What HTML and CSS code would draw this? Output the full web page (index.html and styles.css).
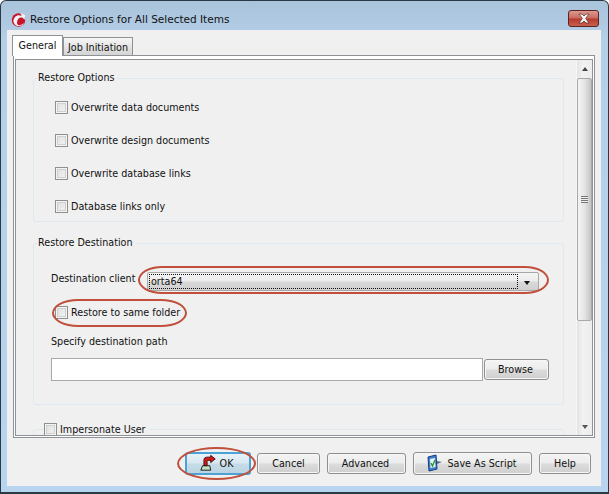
FILE: index.html
```html
<!DOCTYPE html>
<html lang="en">
<head>
<meta charset="utf-8">
<title>Restore Options</title>
<link rel="stylesheet" href="styles.css">
</head>
<body>
<div class="window">
  <header class="titlebar">
    <svg class="app-icon" width="15" height="15" viewBox="0 0 16 16"><circle cx="8" cy="8.500" r="7.200" fill="#c8142a"/><path d="M2.500 10 C3 4 8 2 11.500 4.500 L10 1 L15 3.500 L14.500 8.500 L12.800 6.500 C9.500 4.800 6 7.500 6.500 12.500 C8 15 11.500 14.500 13.500 11.500 C13 16 4.500 17 2.500 10Z" fill="#f4f4f4"/></svg>
    <span class="title">Restore Options for All Selected Items</span>
    <button class="close" aria-label="Close"><svg width="16" height="11" viewBox="0 0 16 11"><path d="M3 1 L6 1 L8 3 L10 1 L13 1 L9.700 5.500 L13 10 L10 10 L8 8 L6 10 L3 10 L6.300 5.500Z" fill="#f2f2f2" stroke="#6a3a36" stroke-width=".8"/></svg></button>
  </header>
  <div class="client">
    <nav class="tabs">
      <div class="tab active">General</div>
      <div class="tab">Job Initiation</div>
    </nav>
    <div class="pane">
      <div class="pane-inner">
        <div class="scroll-content">
          <fieldset class="group options">
            <legend>Restore Options</legend>
            <div class="options-body">
              <label class="check"><span class="box"></span>Overwrite data documents</label>
              <label class="check"><span class="box"></span>Overwrite design documents</label>
              <label class="check"><span class="box"></span>Overwrite database links</label>
              <label class="check"><span class="box"></span>Database links only</label>
            </div>
          </fieldset>
          <fieldset class="group destination">
            <legend>Restore Destination</legend>
            <div class="destination-body">
              <div class="client-row">
                <span class="client-label">Destination client</span>
                <div class="combo">
                  <span class="combo-value">orta64</span>
                  <span class="combo-arrow"></span>
                </div>
              </div>
              <label class="check same"><span class="box"></span>Restore to same folder</label>
              <div class="path-label">Specify destination path</div>
              <div class="path-row">
                <div class="path-input"></div>
                <button class="btn browse">Browse</button>
              </div>
            </div>
          </fieldset>
          <fieldset class="group impersonate">
            <legend><label class="check inline"><span class="box"></span>Impersonate User</label></legend>
          </fieldset>
        </div>
        <div class="scrollbar">
          <span class="arrow up"></span>
          <div class="thumb"><span class="grip"></span></div>
          <span class="arrow down"></span>
        </div>
      </div>
    </div>
    <footer class="actions">
      <button class="btn ok"><svg width="18" height="18" viewBox="0 0 20 18"><path d="M2 17 L4 12 L12 12 L13 17Z" fill="#bfe0c4" stroke="#111" stroke-width="1"/><path d="M5.500 12 L5.500 6 C5.500 3 7 2.500 10 2.500 L13 2.500 L13 0.500 L18 4.500 L13 8.500 L13 6 L10 6 C9 6 9 7 9 8 L9 12Z" fill="#d81818" stroke="#3a0808" stroke-width="1"/></svg>OK</button>
      <button class="btn cancel">Cancel</button>
      <button class="btn advanced">Advanced</button>
      <button class="btn script"><svg width="18" height="18" viewBox="0 0 18 18"><path d="M2 3 L10 1 L11 15 L3 17Z" fill="#3f7fd0" stroke="#143a80" stroke-width="1"/><path d="M4 5 L9 4 L9.500 13 L4.500 14Z" fill="#e8f2fa"/><path d="M5 9 L6.500 12 L9 6" fill="none" stroke="#2a9a2a" stroke-width="1.400"/><path d="M11 7 L16 8 L11 10Z" fill="#5b6f8c"/></svg>Save As Script</button>
      <button class="btn help">Help</button>
    </footer>
  </div>
  <span class="ring ring-combo"></span>
  <span class="ring ring-same"></span>
  <span class="ring ring-ok"></span>
</div>
</body>
</html>
```
FILE: styles.css
```css
* { box-sizing: border-box; }
html, body { margin: 0; padding: 0; }
body {
  width: 609px;
  height: 494px;
  overflow: hidden;
  font-family: "DejaVu Sans", sans-serif;
  font-size: 9.600px;
  color: #111;
  background: #fff;
}
.window {
  position: relative;
  width: 609px;
  height: 494px;
  display: flex;
  flex-direction: column;
  padding: 0 7px 6px 6px;
  border: 1px solid #2a3a44;
  border-bottom-width: 2px;
  border-radius: 6px 6px 0 0;
  background: linear-gradient(180deg, #a9c3db 0, #b4cfe8 40px, #b9d4ee 100%);
}
.titlebar {
  height: 29px;
  flex: none;
  display: flex;
  align-items: flex-start;
  padding-top: 9px;
}
.app-icon { flex: none; margin: 2px 0 0 4px; }
.title {
  margin-left: 4px;
  line-height: 18px;
  font-size: 10.500px;
  color: #111;
  flex: 1;
}
.close {
  width: 31px;
  height: 17px;
  margin-right: 2px;
  padding: 0;
  display: flex;
  align-items: center;
  justify-content: center;
  border: 1px solid #5c2320;
  border-radius: 3px;
  background: linear-gradient(180deg, #dc9a90 0, #c96a5f 48%, #b53a2c 52%, #c9604f 100%);
}
.client {
  flex: 1;
  min-height: 0;
  display: flex;
  flex-direction: column;
  padding: 5px 0 0 6px;
  background: #f0f0f0;
}
.tabs {
  display: flex;
  align-items: flex-end;
  height: 20px;
  flex: none;
  margin-left: -1px;
  position: relative;
  z-index: 1;
}
.tab {
  width: 70px;
  height: 18px;
  padding-top: 4px;
  border: 1px solid #8e9296;
  border-bottom: 0;
  background: linear-gradient(180deg, #f6f6f6, #d4d4d4);
  white-space: nowrap;
  text-align: center;
}
.tab.active {
  width: 51px;
  height: 21px;
  margin-bottom: -1px;
  padding-top: 4px;
  background: #fff;
}
.pane {
  flex: none;
  width: 582px;
  height: 383px;
  padding: 3px 1px 1px 1px;
  border: 1px solid #8e9296;
  background: #fff;
}
.pane-inner {
  width: 100%;
  height: 100%;
  display: flex;
  overflow: hidden;
  border: 1px solid #8e9296;
  background: #f0f0f0;
}
.scroll-content {
  flex: 1;
  min-width: 0;
  height: 500px;
  padding: 12px 12px 0 17px;
}
.group {
  margin: 0;
  padding: 0;
  border: 1px solid #dfe8ef;
  border-radius: 3px;
  min-inline-size: 0;
}
.group legend {
  margin-left: 3px;
  padding: 0 3px 0 1px;
  line-height: 12px;
}
.options { height: 150px; }
.options-body { padding: 7px 0 0 21px; }
.check {
  display: flex;
  align-items: center;
  height: 33px;
  gap: 3px;
}
.box {
  width: 13px;
  height: 13px;
  flex: none;
  border: 1px solid #8e8f8f;
  background: linear-gradient(135deg, #dcdcdc, #f6f6f6);
  box-shadow: inset 0 0 0 1px #f4f4f4, inset 0 0 0 2px #cfcfcf;
}
.destination {
  margin-top: 15px;
  height: 168px;
}
.destination-body { padding: 23px 14px 0 17px; }
.client-row {
  display: flex;
  align-items: flex-start;
  height: 30px;
}
.client-label { width: 96px; flex: none; margin-top: 1px; line-height: 12px; }
.combo {
  flex: 1;
  height: 19px;
  margin-right: 10px;
  display: flex;
  align-items: center;
  border: 1px solid #a8a8a8;
  border-radius: 2px;
  background: linear-gradient(180deg, #f4f4f4 0, #ececec 48%, #d9d9d9 52%, #d0d0d0 100%);
  padding: 1px;
}
.combo-value {
  flex: 1;
  height: 15px;
  line-height: 14px;
  padding-left: 1px;
  border: 1px dotted #111;
}
.combo-arrow {
  width: 19px;
  height: 100%;
  position: relative;
  flex: none;
}
.combo-arrow::after {
  content: "";
  position: absolute;
  left: 6px;
  top: 7px;
  border: 3.500px solid transparent;
  border-top: 4px solid #111;
  border-bottom: 0;
}
.same { height: 20px; margin-left: 4px; }
.path-label { margin-top: 14px; line-height: 12px; }
.path-row {
  display: flex;
  gap: 1px;
  margin-top: 10px;
}
.path-input {
  flex: 1;
  height: 23px;
  border: 1px solid #a9a9a9;
  background: #fff;
}
.btn {
  height: 21px;
  padding: 0;
  display: flex;
  align-items: center;
  justify-content: center;
  border: 1px solid #8f8f8f;
  border-radius: 3px;
  font: 9.600px "DejaVu Sans", sans-serif;
  color: #111;
  background: linear-gradient(180deg, #f4f4f4 0, #ececec 48%, #dcdcdc 52%, #cfcfcf 100%);
  box-shadow: inset 0 0 0 1px #f6f6f6;
}
.browse { width: 65px; flex: none; margin-top: 1px; padding-right: 2px; }
.impersonate {
  margin-top: 18px;
  height: 60px;
}
.group.impersonate legend { padding: 0 3px 0 0; margin-left: 10px; line-height: 13px; }
.check.inline { height: 13px; }
.scrollbar {
  width: 16px;
  height: 100%;
  flex: none;
  display: flex;
  flex-direction: column;
  align-items: center;
  background: linear-gradient(90deg, #e4e4e4, #f2f2f2 40%, #ececec);
  border-left: 1px solid #f6f6f6;
}
.arrow {
  flex: none;
  width: 0;
  height: 0;
  border: 3.500px solid transparent;
}
.arrow.up { margin-top: 7px; border-top: 0; border-bottom: 4px solid #444; }
.arrow.down { margin-top: auto; margin-bottom: 6px; border-bottom: 0; border-top: 4px solid #555; }
.thumb {
  width: 15px;
  height: 243px;
  margin-top: 7px;
  display: flex;
  align-items: center;
  justify-content: center;
  border: 1px solid #a8a8a8;
  border-radius: 2px;
  background: linear-gradient(90deg, #f4f4f4, #e4e4e4 50%, #c4c4c4);
}
.grip {
  width: 7px;
  height: 7px;
  background: repeating-linear-gradient(180deg, #777 0 1px, #eee 1px 2px);
}
.actions {
  flex: 1;
  display: flex;
  align-items: center;
  padding-top: 2px;
}
.actions .btn { flex: none; }
.ok {
  width: 66px;
  height: 23px;
  margin-left: 172px;
  padding-right: 4px;
  gap: 3px;
  border: 2px solid #4aa3d4;
  background: linear-gradient(180deg, #e6f2f8, #d8e8f0 48%, #c6dce8 52%, #bcd4e2);
  box-shadow: none;
}
.cancel { width: 63px; margin-left: 6px; }
.advanced { width: 79px; margin-left: 7px; padding-right: 2px; }
.script { width: 119px; height: 23px; margin-left: 7px; padding-right: 2px; gap: 3px; }
.help { width: 52px; margin-left: 7px; }
.ring {
  position: absolute;
  border: 2px solid #c0503c;
  pointer-events: none;
}
.ring-combo { left: 137px; top: 265px; width: 411px; height: 28px; border-radius: 24px / 50%; }
.ring-same { left: 51px; top: 298px; width: 135px; height: 28px; border-radius: 26px / 50%; }
.ring-ok { left: 176px; top: 446px; width: 79px; height: 33px; border-radius: 50%; }
```
